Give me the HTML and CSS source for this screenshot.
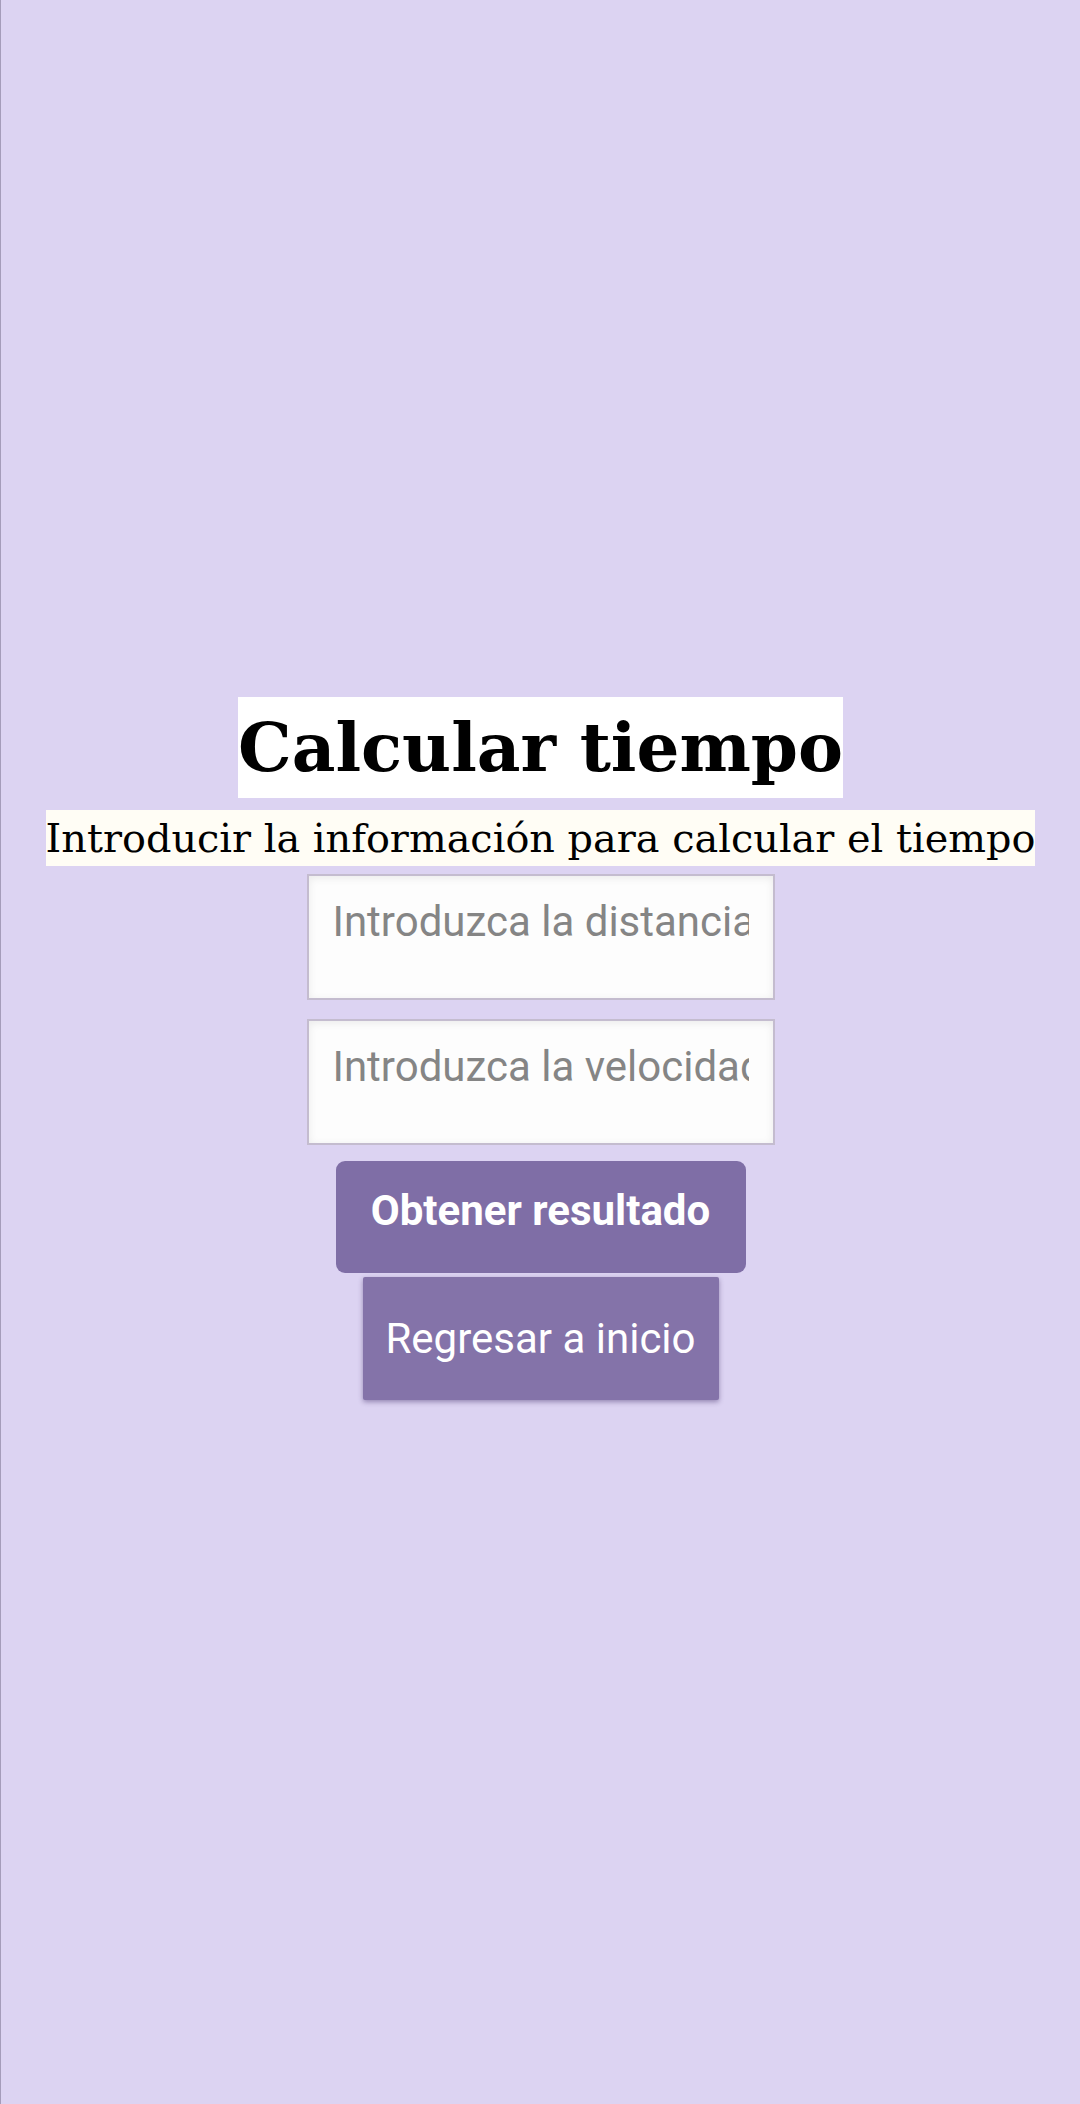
FILE: index.html
```html
<!DOCTYPE html>
<html lang="es">
<head>
<meta charset="utf-8">
<title>Calcular tiempo</title>
<link rel="stylesheet" href="styles.css">
</head>
<body>
<main class="page">
  <h1 class="title">Calcular tiempo</h1>
  <p class="subtitle">Introducir la información para calcular el tiempo</p>
  <input class="field field-first" type="text" placeholder="Introduzca la distancia">
  <input class="field field-second" type="text" placeholder="Introduzca la velocidad">
  <button class="btn btn-primary" type="button">Obtener resultado</button>
  <button class="btn btn-secondary" type="button">Regresar a inicio</button>
</main>
</body>
</html>
```
FILE: styles.css
```css
html, body {
  margin: 0;
  padding: 0;
}
body {
  background: #dcd3f2;
  border-left: 1px solid #a59cba;
  min-height: 100vh;
  box-sizing: border-box;
}
.page {
  min-height: 100vh;
  box-sizing: border-box;
  padding-bottom: 8px;
  display: flex;
  flex-direction: column;
  align-items: center;
  justify-content: center;
}
.title {
  margin: 0;
  background: #ffffff;
  font-family: "DejaVu Serif", serif;
  font-weight: bold;
  font-size: 67.5px;
  line-height: 101px;
  color: #000;
}
.subtitle {
  margin: 12px 0 0;
  background: #fffdf5;
  font-family: "DejaVu Serif", serif;
  font-size: 39.8px;
  line-height: 56px;
  color: #000;
}
.field {
  box-sizing: border-box;
  width: 468px;
  height: 126px;
  margin: 0;
  border: 2px solid #c4bccf;
  background: #fdfdfd;
  box-shadow: inset 0 2px 8px rgba(0,0,0,0.08);
  font-family: Roboto, sans-serif;
  font-size: 42px;
  padding: 0 24px 30px 24px;
  color: #333;
}
.field::placeholder {
  color: #858585;
}
.field-first {
  margin-top: 8px;
}
.field-second {
  margin-top: 19px;
}
.btn {
  font-family: Roboto, sans-serif;
  font-size: 42px;
  color: #ffffff;
  border: none;
  cursor: pointer;
}
.btn-primary {
  margin-top: 16px;
  width: 410px;
  height: 112px;
  border-radius: 9px;
  background: #7f6ea6;
  font-weight: bold;
  padding: 0 0 12px;
}
.btn-secondary {
  margin-top: 4px;
  width: 356px;
  height: 123px;
  border-radius: 2px;
  background: #8473a9;
  box-shadow: 0 2px 5px rgba(60,40,100,0.45);
  padding: 0;
}
```
